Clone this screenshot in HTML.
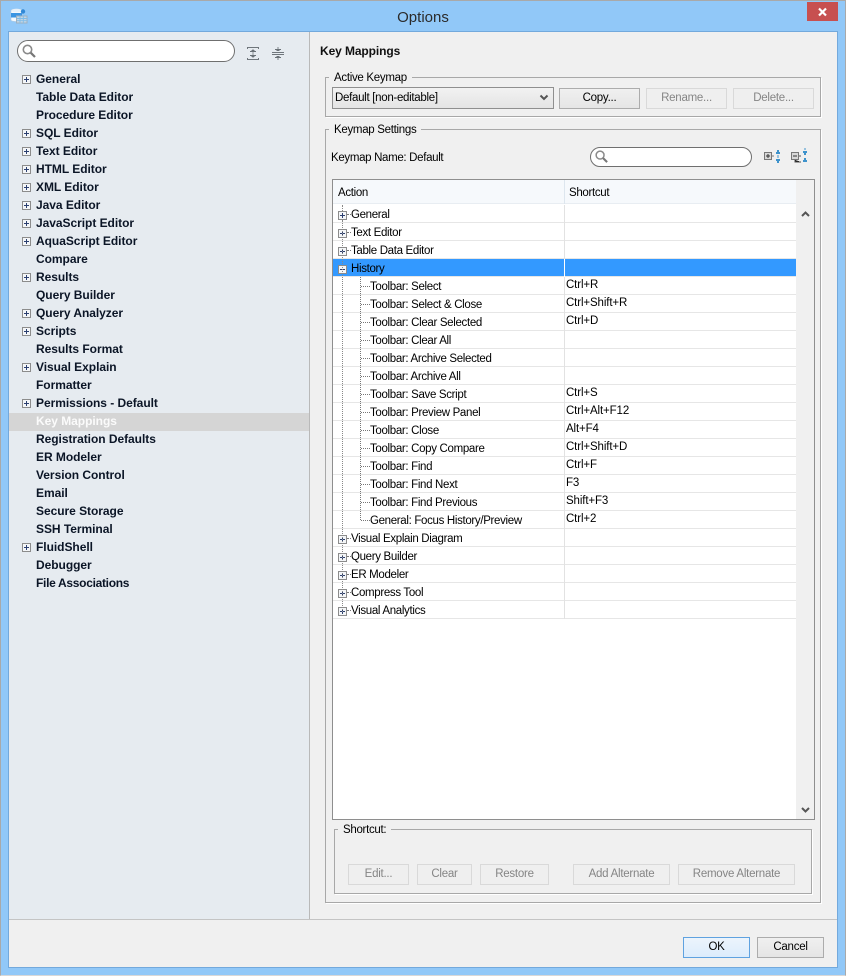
<!DOCTYPE html>
<html><head><meta charset="utf-8"><title>Options</title>
<style>
html,body{margin:0;padding:0;width:846px;height:976px;overflow:hidden;background:#fff}
*{box-sizing:border-box}
body{font-family:"Liberation Sans",sans-serif;font-size:11.5px;color:#000;position:relative}
div,span,svg{position:absolute}
.t{white-space:nowrap;line-height:14px;letter-spacing:-.33px}
.grp{border:1px solid #a8a8a8;box-shadow:1px 1px 0 #fff}
.lg{background:#f0f0f0;padding:0 5px;line-height:14px;white-space:nowrap;font-size:11.5px;letter-spacing:-.3px}
.btn{height:21px;border:1px solid #acacac;background:linear-gradient(#f0f0f0,#e5e5e5);text-align:center;line-height:19px;font-size:11.5px;letter-spacing:-.25px;color:#000}
.dis{border:1px solid #d9d9d9;background:#efefef;color:#858585}
.search{background:#fff;border:1px solid #6f6f6f;border-radius:11px}
#nav{left:9px;top:71px;width:300px}
.n{position:relative;height:18px;font-weight:bold;font-size:12px;line-height:16px;padding-left:27px;color:#0b1526;white-space:nowrap;letter-spacing:-.04px}
.sel{background:#d5d5d5;color:#fbfbfb}
.pb{left:13px;top:4px;width:9px;height:9px;border:1px solid #8c8c8c;background:#f4f6f8}
.pb:before{content:"";position:absolute;left:1px;top:3px;width:5px;height:1px;background:#2b3f70}
.pb:after{content:"";position:absolute;left:3px;top:1px;width:1px;height:5px;background:#2b3f70}
#rows{left:333px;top:205px;width:463px;z-index:1}
.r{position:relative;height:18px;border-bottom:1px solid #e6e6e6;line-height:18px;white-space:nowrap}
.r i{position:absolute;left:18px;top:3px;font-style:normal;line-height:15px;letter-spacing:-.33px}
.r i.c{left:37px;top:3px}
.r b{position:absolute;left:233px;top:1px;font-weight:normal;line-height:15px;letter-spacing:-.12px}
.r u{position:absolute;left:231px;top:0;height:18px;width:1px;background:#e2e2e2}
.r.h{background:#3399ff}
.r.h u{background:#fff}
.ex{left:5px;top:6px;width:9px;height:9px;border:1px solid #8c8c8c;background:#f4f6f8;z-index:2}
.ex:before{content:"";position:absolute;left:1px;top:3px;width:5px;height:1px;background:#2b3f70}
.ex:after{content:"";position:absolute;left:3px;top:1px;width:1px;height:5px;background:#2b3f70}
.ex.m:after{display:none}
.hd{left:14px;top:9px;width:4px;border-top:1px dotted #777}
.hc{left:28px;top:9px;width:9px;border-top:1px dotted #777}
</style></head>
<body>
<div style="left:0;top:0;width:846px;height:976px;background:#91c8f8;border:1px solid #a9a9a9;border-bottom-color:#d8d8d8"></div>

<svg style="left:10px;top:8px" width="18" height="17" viewBox="0 0 18 17">
<path d="M1 2.500C1 .5 12 .5 12 2.500V12C12 14 1 14 1 12Z" fill="#f6fafd" stroke="#b7cbdc" stroke-width=".6"/>
<path d="M1 5H12V9.500H1Z" fill="#3b95e2"/>
<ellipse cx="6.500" cy="2.500" rx="5" ry="1.800" fill="#e6f1fa"/>
<circle cx="13" cy="3.500" r="2.200" fill="#3289d6"/>
<rect x="6.500" y="8" width="10.500" height="7" fill="#c4d6e4" stroke="#9cb0c0"/>
<path d="M7 10.500H17M7 12.700H17M10 8V15M13.300 8V15" stroke="#7fbce8" stroke-width=".9"/>
</svg>
<div class="t" style="left:323px;top:9px;width:200px;text-align:center;font-size:15px;line-height:18px;color:#2b2b2b;letter-spacing:0">Options</div>
<div style="left:807px;top:2px;width:31px;height:19px;background:#c75050"></div>
<svg style="left:817px;top:7px" width="11" height="10" viewBox="0 0 11 10"><path d="M2 1.500L9 8.500M9 1.500L2 8.500" stroke="#fff" stroke-width="2.200"/></svg>

<div style="left:8px;top:31px;width:830px;height:937px;background:#f0f0f0;border:1px solid #73a9dc"></div>
<div style="left:9px;top:32px;width:301px;height:887px;background:#e6ebf0;border-right:1px solid #b9b9b9"></div>
<div style="left:9px;top:919px;width:828px;height:1px;background:#c4c4c4"></div>

<div class="search" style="left:17px;top:40px;width:218px;height:22px"></div>
<svg style="left:21px;top:43px" width="16" height="16" viewBox="0 0 16 16"><circle cx="6.500" cy="6.500" r="4.200" fill="none" stroke="#8a8a8a" stroke-width="1.600"/><path d="M9.700 9.700L14 14" stroke="#777" stroke-width="2.200"/></svg>
<svg style="left:246px;top:46px" width="14" height="15" viewBox="0 0 14 15" shape-rendering="crispEdges"><path d="M1 1.500H13M1 13.500H13M1.500 1V3M12.500 1V3M1.500 12V14M12.500 12V14" stroke="#6f767c"/><path d="M7 3V12" stroke="#8d9398"/><path d="M4 5H10V6H4ZM5.500 4H8.500V5H5.500ZM4 9H10V10H4ZM5.500 10H8.500V11H5.500Z" fill="#6a7177"/></svg>
<svg style="left:271px;top:46px" width="14" height="15" viewBox="0 0 14 15" shape-rendering="crispEdges"><path d="M1 6.500H13M1 8.500H13" stroke="#6f767c"/><path d="M7 1V5M7 10V14" stroke="#7e848a"/><path d="M4 3H10V4H4ZM5.500 4H8.500V5H5.500ZM4 11H10V12H4ZM5.500 10H8.500V11H5.500Z" fill="#6a7177"/></svg>

<div id="nav">
<div class="n"><span class="pb"></span>General</div>
<div class="n">Table Data Editor</div>
<div class="n">Procedure Editor</div>
<div class="n"><span class="pb"></span>SQL Editor</div>
<div class="n"><span class="pb"></span>Text Editor</div>
<div class="n"><span class="pb"></span>HTML Editor</div>
<div class="n"><span class="pb"></span>XML Editor</div>
<div class="n"><span class="pb"></span>Java Editor</div>
<div class="n"><span class="pb"></span>JavaScript Editor</div>
<div class="n"><span class="pb"></span>AquaScript Editor</div>
<div class="n">Compare</div>
<div class="n"><span class="pb"></span>Results</div>
<div class="n">Query Builder</div>
<div class="n"><span class="pb"></span>Query Analyzer</div>
<div class="n"><span class="pb"></span>Scripts</div>
<div class="n">Results Format</div>
<div class="n"><span class="pb"></span>Visual Explain</div>
<div class="n">Formatter</div>
<div class="n"><span class="pb"></span>Permissions - Default</div>
<div class="n sel">Key Mappings</div>
<div class="n">Registration Defaults</div>
<div class="n">ER Modeler</div>
<div class="n">Version Control</div>
<div class="n">Email</div>
<div class="n">Secure Storage</div>
<div class="n">SSH Terminal</div>
<div class="n"><span class="pb"></span>FluidShell</div>
<div class="n">Debugger</div>
<div class="n" style="letter-spacing:-.3px">File Associations</div>
</div>

<div class="t" style="left:320px;top:44px;font-weight:bold;font-size:12px;color:#111;letter-spacing:-.1px">Key Mappings</div>

<div class="grp" style="left:325px;top:77px;width:496px;height:40px"></div>
<div class="lg" style="left:329px;top:71px">Active Keymap</div>
<div style="left:332px;top:87px;width:222px;height:22px;border:1px solid #8f8f8f;background:linear-gradient(#f2f2f2,#e4e4e4);padding-left:2px;line-height:20px;font-size:11.5px;letter-spacing:-.3px;white-space:nowrap">Default [non-editable]</div>
<svg style="left:539px;top:94px" width="10" height="8" viewBox="0 0 10 8"><path d="M1.500 1.500L5 5L8.500 1.500" fill="none" stroke="#555" stroke-width="2"/></svg>
<div class="btn" style="left:559px;top:88px;width:81px">Copy...</div>
<div class="btn dis" style="left:646px;top:88px;width:81px">Rename...</div>
<div class="btn dis" style="left:733px;top:88px;width:81px">Delete...</div>

<div class="grp" style="left:325px;top:129px;width:496px;height:774px"></div>
<div class="lg" style="left:329px;top:123px">Keymap Settings</div>
<div class="t" style="left:331px;top:151px">Keymap Name: Default</div>
<div class="search" style="left:590px;top:147px;width:162px;height:20px"></div>
<svg style="left:594px;top:149px" width="15" height="15" viewBox="0 0 16 16"><circle cx="6.500" cy="6.500" r="4.200" fill="none" stroke="#8a8a8a" stroke-width="1.600"/><path d="M9.700 9.700L14 14" stroke="#777" stroke-width="2.200"/></svg>
<svg style="left:763px;top:148px" width="18" height="18" viewBox="0 0 18 18" shape-rendering="crispEdges"><rect x="1.500" y="4.500" width="7" height="7" fill="#d8d8d8" stroke="#777"/><path d="M3 8H7M5 6V10" stroke="#333"/><path d="M9 8H11" stroke="#777"/><path d="M13 4H17V6H13ZM14 2H16V4H14ZM13 11H17V13H13ZM14 13H16V15H14Z" fill="#3e93cc"/><path d="M15 7V10" stroke="#3e93cc"/></svg>
<svg style="left:790px;top:148px" width="18" height="18" viewBox="0 0 18 18" shape-rendering="crispEdges"><rect x="1.500" y="4.500" width="7" height="7" fill="#d8d8d8" stroke="#777"/><path d="M3 8H7" stroke="#333"/><path d="M9 8H11M5 12V14H11" stroke="#555"/><path d="M13 3H17V5H13ZM14 5H16V7H14ZM14 10H16V12H14ZM13 12H17V14H13Z" fill="#3e93cc"/><path d="M15 0V2" stroke="#3e93cc"/></svg>

<div style="left:332px;top:179px;width:483px;height:641px;background:#fff;border:1px solid #8e8e8e"></div>
<div style="left:333px;top:180px;width:463px;height:24px;background:#f6f9fc;border-bottom:1px solid #e8edf2"></div>
<div style="left:796px;top:180px;width:18px;height:639px;background:#f0f0f0"></div>
<div style="left:564px;top:180px;width:1px;height:24px;background:#dde6ee"></div>
<div class="t" style="left:338px;top:186px">Action</div>
<div class="t" style="left:569px;top:186px">Shortcut</div>
<svg style="left:801px;top:210px" width="9" height="8" viewBox="0 0 9 8"><path d="M1 6L4.500 2.500L8 6" fill="none" stroke="#555" stroke-width="2"/></svg>
<svg style="left:801px;top:806px" width="9" height="8" viewBox="0 0 9 8"><path d="M1 2L4.500 5.500L8 2" fill="none" stroke="#555" stroke-width="2"/></svg>

<div id="rows">
<div class="r"><span class="ex"></span><span class="hd"></span><i>General</i><u></u></div>
<div class="r"><span class="ex"></span><span class="hd"></span><i>Text Editor</i><u></u></div>
<div class="r"><span class="ex"></span><span class="hd"></span><i>Table Data Editor</i><u></u></div>
<div class="r h"><span class="ex m"></span><i>History</i><u></u></div>
<div class="r"><span class="hc"></span><i class="c">Toolbar: Select</i><u></u><b>Ctrl+R</b></div>
<div class="r"><span class="hc"></span><i class="c">Toolbar: Select &amp; Close</i><u></u><b>Ctrl+Shift+R</b></div>
<div class="r"><span class="hc"></span><i class="c">Toolbar: Clear Selected</i><u></u><b>Ctrl+D</b></div>
<div class="r"><span class="hc"></span><i class="c">Toolbar: Clear All</i><u></u></div>
<div class="r"><span class="hc"></span><i class="c">Toolbar: Archive Selected</i><u></u></div>
<div class="r"><span class="hc"></span><i class="c">Toolbar: Archive All</i><u></u></div>
<div class="r"><span class="hc"></span><i class="c">Toolbar: Save Script</i><u></u><b>Ctrl+S</b></div>
<div class="r"><span class="hc"></span><i class="c">Toolbar: Preview Panel</i><u></u><b>Ctrl+Alt+F12</b></div>
<div class="r"><span class="hc"></span><i class="c">Toolbar: Close</i><u></u><b>Alt+F4</b></div>
<div class="r"><span class="hc"></span><i class="c">Toolbar: Copy Compare</i><u></u><b>Ctrl+Shift+D</b></div>
<div class="r"><span class="hc"></span><i class="c">Toolbar: Find</i><u></u><b>Ctrl+F</b></div>
<div class="r"><span class="hc"></span><i class="c">Toolbar: Find Next</i><u></u><b>F3</b></div>
<div class="r"><span class="hc"></span><i class="c">Toolbar: Find Previous</i><u></u><b>Shift+F3</b></div>
<div class="r"><span class="hc"></span><i class="c">General: Focus History/Preview</i><u></u><b>Ctrl+2</b></div>
<div class="r"><span class="ex"></span><span class="hd"></span><i>Visual Explain Diagram</i><u></u></div>
<div class="r"><span class="ex"></span><span class="hd"></span><i>Query Builder</i><u></u></div>
<div class="r"><span class="ex"></span><span class="hd"></span><i>ER Modeler</i><u></u></div>
<div class="r"><span class="ex"></span><span class="hd"></span><i>Compress Tool</i><u></u></div>
<div class="r"><span class="ex"></span><span class="hd"></span><i>Visual Analytics</i><u></u></div>
</div>
<div style="left:342px;top:205px;height:6px;border-left:1px dotted #888;z-index:2"></div>
<div style="left:342px;top:220px;height:392px;border-left:1px dotted #888;z-index:2"></div>
<div style="left:360px;top:277px;height:243px;border-left:1px dotted #777;z-index:2"></div>

<div class="grp" style="left:334px;top:829px;width:478px;height:65px"></div>
<div class="lg" style="left:338px;top:823px">Shortcut:</div>
<div class="btn dis" style="left:348px;top:864px;width:61px">Edit...</div>
<div class="btn dis" style="left:417px;top:864px;width:55px">Clear</div>
<div class="btn dis" style="left:480px;top:864px;width:69px">Restore</div>
<div class="btn dis" style="left:573px;top:864px;width:97px">Add Alternate</div>
<div class="btn dis" style="left:678px;top:864px;width:117px">Remove Alternate</div>

<div class="btn" style="left:683px;top:937px;width:67px;border-color:#5fa2e0;background:linear-gradient(#ecf4fc,#dcecfc)">OK</div>
<div class="btn" style="left:757px;top:937px;width:67px">Cancel</div>
</body></html>
